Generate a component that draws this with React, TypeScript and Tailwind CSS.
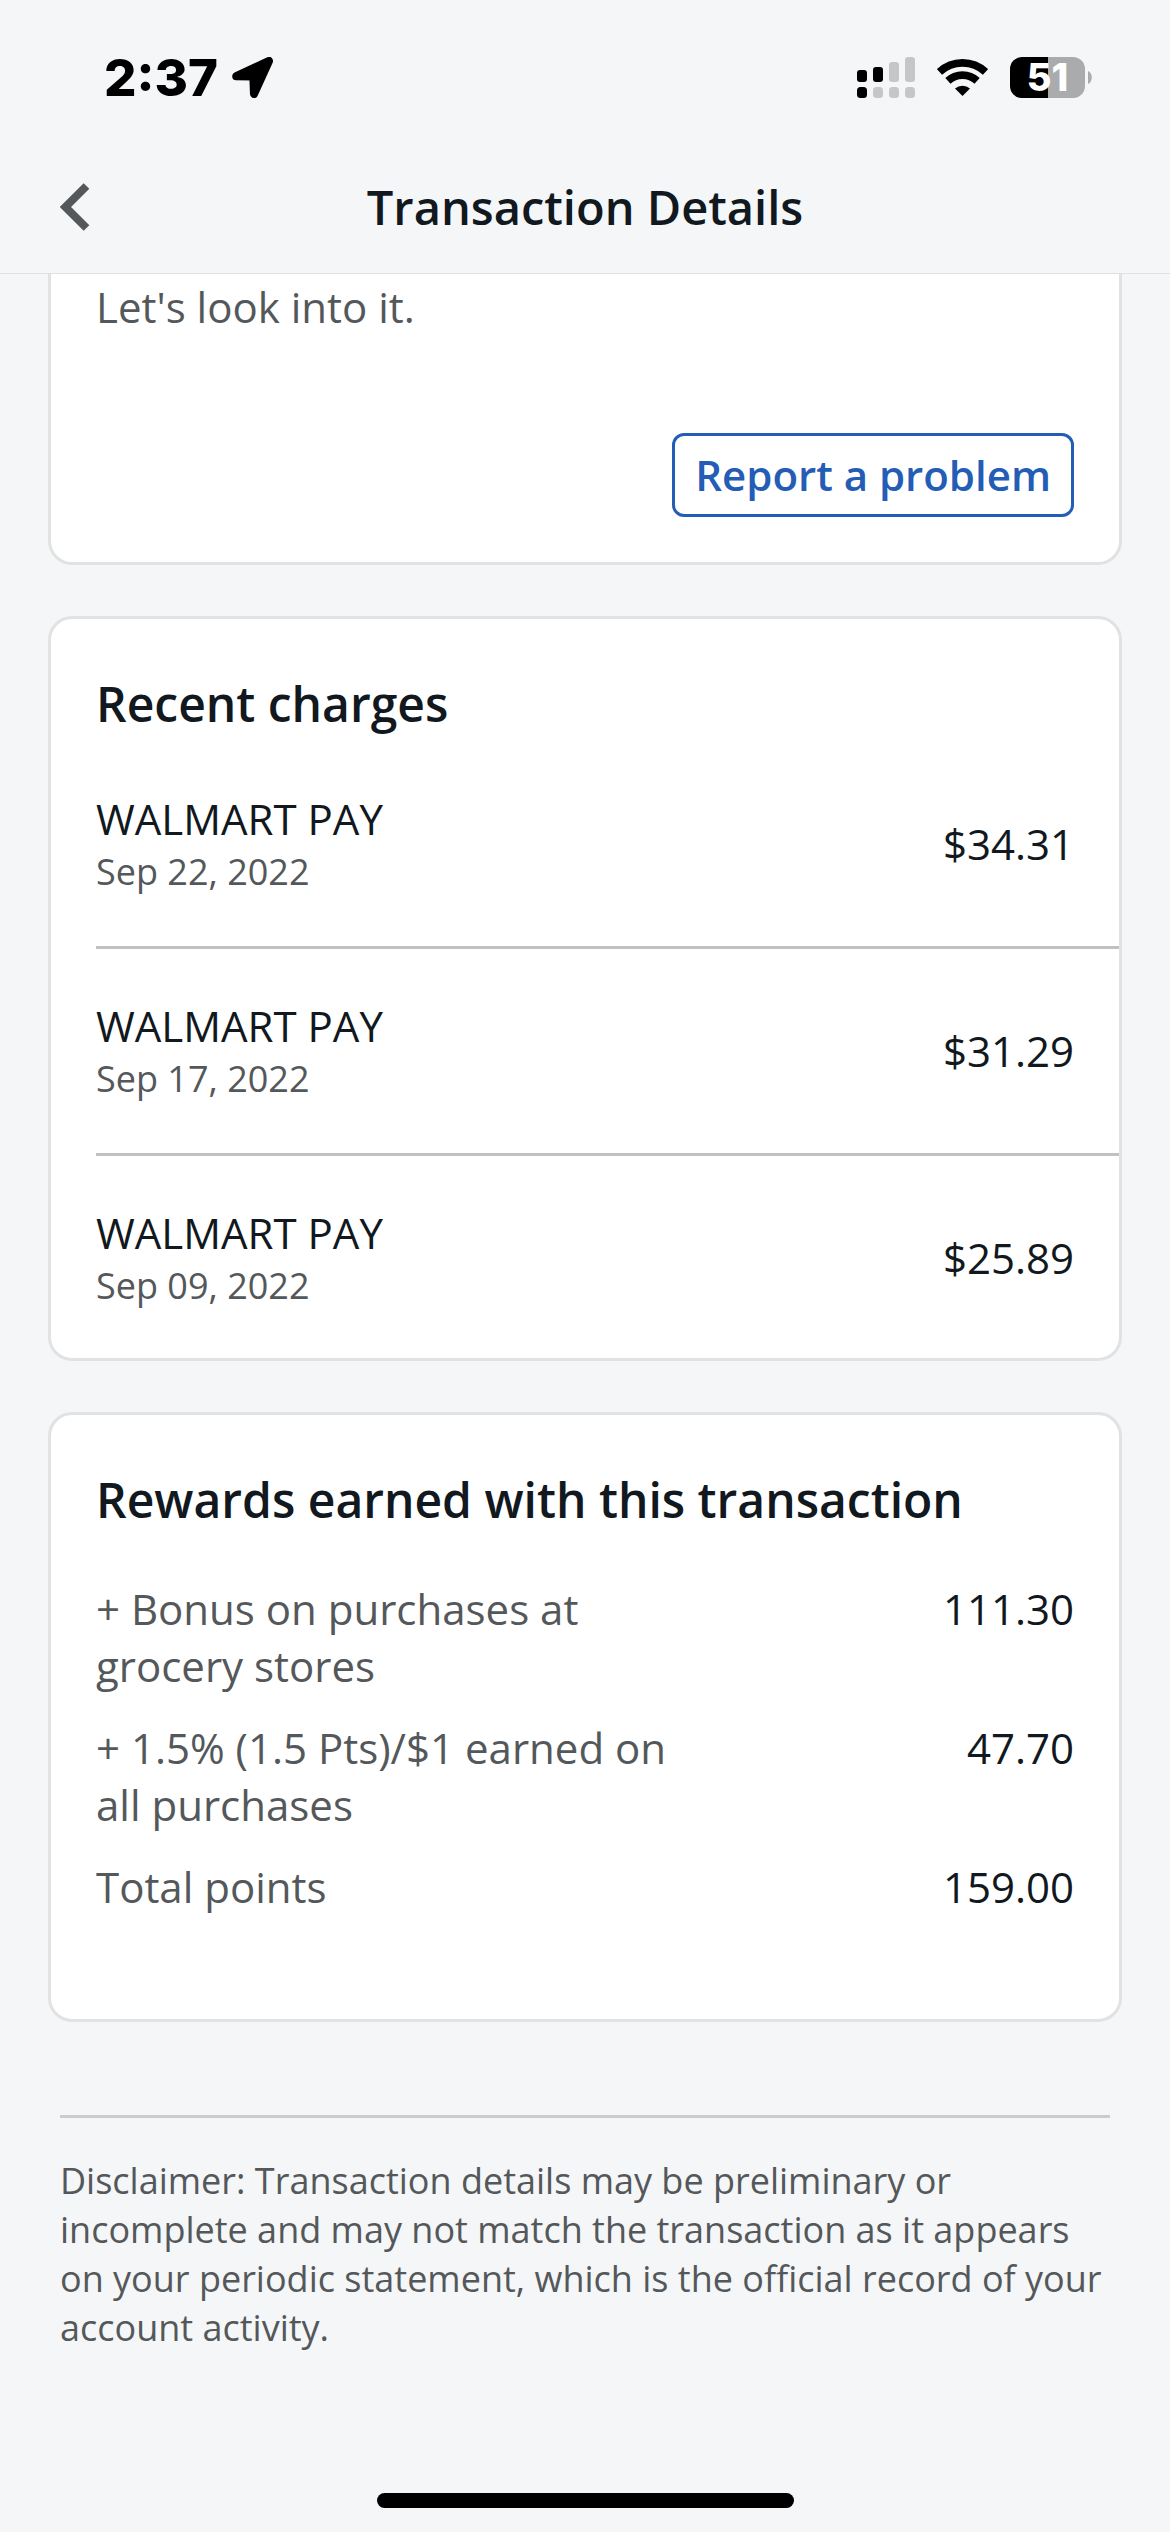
import React from 'react';

interface Charge {
  merchant: string;
  date: string;
  amount: string;
}

interface Reward {
  label: string;
  points: string;
}

const charges: Charge[] = [
  { merchant: 'WALMART PAY', date: 'Sep 22, 2022', amount: '$34.31' },
  { merchant: 'WALMART PAY', date: 'Sep 17, 2022', amount: '$31.29' },
  { merchant: 'WALMART PAY', date: 'Sep 09, 2022', amount: '$25.89' },
];

const rewards: Reward[] = [
  { label: '+ Bonus on purchases at grocery stores', points: '111.30' },
  { label: '+ 1.5% (1.5 Pts)/$1 earned on all purchases', points: '47.70' },
  { label: 'Total points', points: '159.00' },
];

const LocationIcon = () => (
  <svg width="41" height="41" viewBox="0 0 41 41" aria-hidden="true">
    <path d="M4.2 19.2 37 4 22 37 21.3 19.6Z" fill="#000" stroke="#000" strokeWidth="8" strokeLinejoin="round" />
  </svg>
);

const SignalIcon = () => (
  <svg width="58" height="41" viewBox="0 0 58 41" aria-hidden="true">
    <g fill="#000">
      <rect x="0" y="13" width="10" height="12" rx="3" />
      <rect x="16" y="10" width="10" height="15" rx="3" />
      <rect x="0" y="30" width="10" height="11" rx="3.5" />
    </g>
    <g fill="#c5c6c7">
      <rect x="32" y="5" width="10" height="20" rx="3" />
      <rect x="48" y="0" width="10" height="25" rx="3" />
      <rect x="16" y="30" width="10" height="11" rx="3.5" />
      <rect x="32" y="30" width="10" height="11" rx="3.5" />
      <rect x="48" y="30" width="10" height="11" rx="3.5" />
    </g>
  </svg>
);

const WifiIcon = () => (
  <svg width="51" height="37" viewBox="0 0 51 37" aria-hidden="true">
    <g fill="none" stroke="#000" strokeWidth="7.6">
      <path d="M2.5 12.9A33.7 33.7 0 0 1 48.5 12.9" />
      <path d="M10.9 21.9A21.4 21.4 0 0 1 40.1 21.9" />
    </g>
    <path d="M18 29.4A12 12 0 0 1 33 29.4L25.5 37Z" />
  </svg>
);

const Battery = () => (
  <div className="flex items-center gap-[3px]">
    <div className="flex h-[41px] w-[75px] items-center justify-center rounded-xl bg-linear-to-r from-black from-51% to-[#aaabac] to-51%">
      <span className="font-['Inter',sans-serif] text-[38px] leading-[41px] font-extrabold text-white">51</span>
    </div>
    <svg width="4" height="13" viewBox="0 0 4 13" aria-hidden="true">
      <path d="M0 0C5 2 5 11 0 13Z" fill="#aaabac" />
    </svg>
  </div>
);

const StatusBar = () => (
  <div className="flex h-[141px] items-center justify-between pt-[14px] pr-[78px] pl-[104px]">
    <div className="flex items-center gap-[14px]">
      <span className="font-['Inter',sans-serif] text-[51px] leading-[60px] font-extrabold text-black">2:37</span>
      <LocationIcon />
    </div>
    <div className="flex items-center gap-[22px]">
      <SignalIcon />
      <WifiIcon />
      <Battery />
    </div>
  </div>
);

export default function App() {
  return (
    <div className="flex min-h-screen flex-col bg-[#f4f6f8] font-['Open_Sans','Noto_Sans',sans-serif] text-[42px] leading-[57px] text-[#111820]">
      <header className="border-b border-[#dfe1e2]">
        <StatusBar />
        <div className="grid h-[132px] grid-cols-[1fr_auto_1fr] items-center px-[60px]">
          <button type="button" aria-label="Back" className="justify-self-start">
            <svg width="30" height="48" viewBox="0 0 30 48" aria-hidden="true">
              <path d="M26.5 3 5.5 24 26.5 45" fill="none" stroke="#54585a" strokeWidth="8" />
            </svg>
          </button>
          <h1 className="text-[47px] leading-[65px] font-semibold">Transaction Details</h1>
        </div>
      </header>

      <main className="flex flex-col px-12">
        {/* Report a problem */}
        <section className="rounded-b-3xl border-3 border-t-0 border-[#e0e2e3] bg-white px-[45px] pt-1 pb-[45px]">
          <p className="text-[#54585a]">Let's look into it.</p>
          <div className="mt-[98px] flex justify-end">
            <button
              type="button"
              className="h-[84px] rounded-xl border-3 border-[#245db5] px-5 pb-[2px] font-semibold text-[#245db5]"
            >
              Report a problem
            </button>
          </div>
        </section>

        {/* Recent charges */}
        <section className="mt-[51px] rounded-3xl border-3 border-[#e0e2e3] bg-white pt-[52px] pl-[45px]">
          <h2 className="mb-[6px] text-[48px] leading-[65px] font-semibold">Recent charges</h2>
          <ul className="divide-y-3 divide-[#bfc1c3]">
            {charges.map((charge) => (
              <li
                key={charge.date}
                className="flex items-center justify-between pt-12 pr-[45px] pb-[49px] last:pb-[47px]"
              >
                <div>
                  <p>{charge.merchant}</p>
                  <p className="text-[36px] leading-[50px] text-[#54585a]">{charge.date}</p>
                </div>
                <span>{charge.amount}</span>
              </li>
            ))}
          </ul>
        </section>

        {/* Rewards */}
        <section className="mt-[51px] rounded-3xl border-3 border-[#e0e2e3] bg-white px-[45px] pt-[52px] pb-[104px]">
          <h2 className="mb-12 text-[48px] leading-[65px] font-semibold">Rewards earned with this transaction</h2>
          <dl className="flex flex-col gap-[25px]">
            {rewards.map((reward) => (
              <div key={reward.label} className="flex justify-between">
                <dt className="w-3/5 text-[#54585a]">{reward.label}</dt>
                <dd>{reward.points}</dd>
              </div>
            ))}
          </dl>
        </section>
      </main>

      <footer className="mx-[60px] mt-[93px] border-t-3 border-[#cacccd] pt-[38px] pb-12">
        <p className="text-[36px] leading-[49px] text-[#54585a]">
          Disclaimer: Transaction details may be preliminary or incomplete and may not match the transaction as it
          appears on your periodic statement, which is the official record of your account activity.
        </p>
      </footer>

      {/* Home indicator */}
      <div className="mt-auto mb-6 h-[15px] w-[417px] self-center rounded-full bg-black" />
    </div>
  );
}
